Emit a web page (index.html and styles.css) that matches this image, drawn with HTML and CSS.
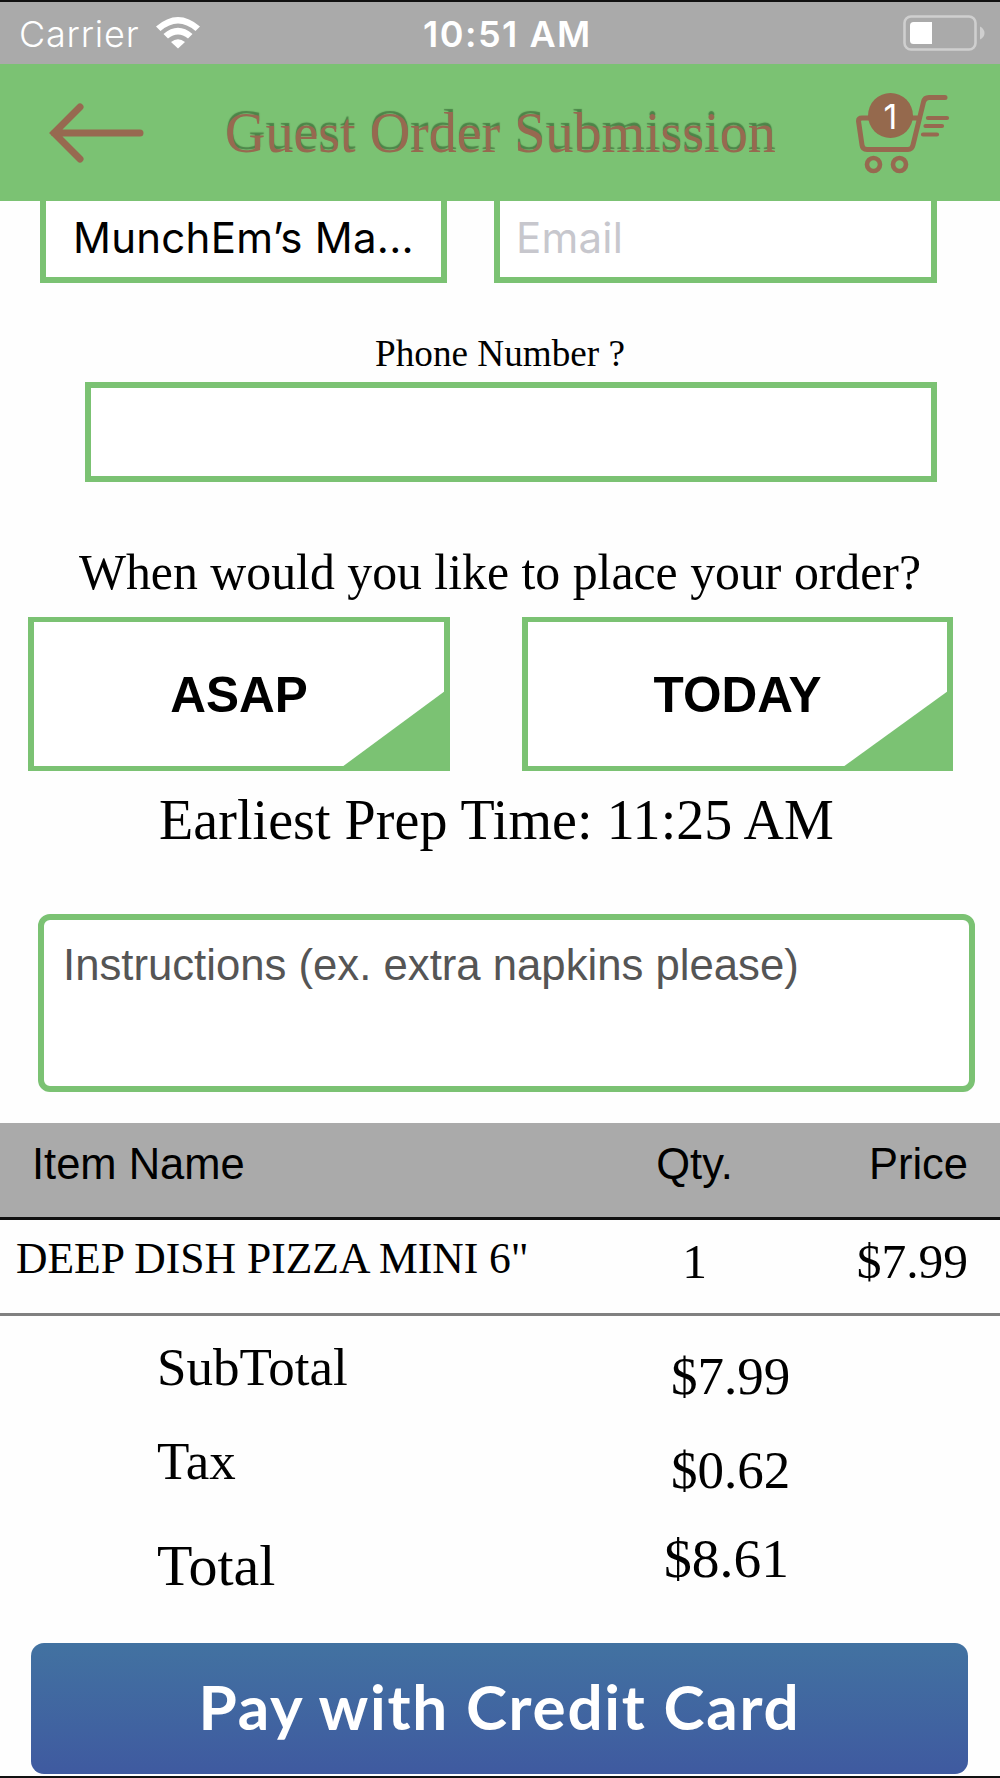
FILE: index.html
```html
<!DOCTYPE html>
<html lang="en">
<head>
    <meta charset="UTF-8">
    <title>Guest Order Submission</title>
    <link rel="stylesheet" href="styles.css">
</head>
<body>
    <div class="status">
        <div class="carrier">
            <span>Carrier</span>
            <svg class="wifi" width="44" height="32" viewBox="0 0 44 32">
                <path d="M0 9.5 Q22 -9.5 44 9.5 L39.5 14 Q22 -1 4.500 14 Z"/>
                <path d="M7.500 17 Q22 4.500 36.500 17 L32 21.500 Q22 13.500 12 21.500 Z"/>
                <path d="M15 25 Q22 19.500 29 25 L22 31.500 Z"/>
            </svg>
        </div>
        <div class="clock">10:51 AM</div>
        <svg class="battery" width="82" height="36" viewBox="0 0 82 36">
            <rect x="1.500" y="1.500" width="71" height="33" rx="6.500" fill="none" stroke="#cfcfcf" stroke-width="2.600"/>
            <path d="M29 7 V29 H10.500 Q7 29 7 25.500 V10.500 Q7 7 10.500 7 Z" fill="#fff"/>
            <path d="M77 11.500 Q81.500 14 81.500 18 Q81.500 22 77 24.500 Z" fill="#cfcfcf"/>
        </svg>
    </div>
    <div class="header">
        <svg class="back" width="96" height="60" viewBox="0 0 96 60">
            <path d="M31 4 L5 30 L31 56 M5 30 H91"/>
        </svg>
        <h1 class="title">Guest Order Submission</h1>
        <div class="cart">
            <svg width="96" height="84" viewBox="0 0 96 84">
                <path d="M90 5.500 H74 Q69.500 5.500 68.500 10 L58 53 Q57 57.500 53 57.500 H12 Q7.500 57.500 7 53 L3.500 29 Q3.500 26 7 26 H64" stroke-width="5"/>
                <path d="M73 26 H92 M70.500 34 H87 M68 42.500 H82" stroke-width="4.200"/>
                <circle cx="18.500" cy="72.500" r="6.500" stroke-width="4.600"/>
                <circle cx="44.500" cy="72.500" r="6.500" stroke-width="4.600"/>
            </svg>
            <span class="badge">1</span>
        </div>
    </div>

    <div class="fields">
        <div class="field name">MunchEm’s Ma...</div>
        <div class="field email">Email</div>
    </div>
    <div class="phone-label">Phone Number ?</div>
    <div class="phone"></div>

    <div class="question">When would you like to place your order?</div>
    <div class="times">
        <div class="btn asap">
            <span>ASAP</span>
            <svg class="corner" width="103" height="76" viewBox="0 0 103 76"><path d="M103 0 V76 H0 Z"/></svg>
        </div>
        <div class="btn today">
            <span>TODAY</span>
            <svg class="corner" width="105" height="76" viewBox="0 0 105 76"><path d="M105 0 V76 H0 Z"/></svg>
        </div>
    </div>
    <div class="prep">Earliest Prep Time: 11:25 AM</div>

    <div class="instructions">Instructions (ex. extra napkins please)</div>

    <div class="row head">
        <div class="item">Item Name</div>
        <div class="qty">Qty.</div>
        <div class="price">Price</div>
    </div>
    <div class="row line">
        <div class="item">DEEP DISH PIZZA MINI 6"</div>
        <div class="qty">1</div>
        <div class="price">$7.99</div>
    </div>
    <div class="totals">
        <div class="labels">
            <div>SubTotal</div>
            <div>Tax</div>
            <div class="big">Total</div>
        </div>
        <div class="amounts">
            <div>$7.99</div>
            <div>$0.62</div>
            <div class="big">$8.61</div>
        </div>
    </div>

    <div class="pay">Pay with Credit Card</div>
    <div class="bottom"></div>
</body>
</html>
```

FILE: styles.css
```css
* {
    box-sizing: border-box;
}
body {
    margin: 0;
    width: 1000px;
    height: 1778px;
    overflow: hidden;
    background-color: #fefefe;
    color: #000;
    font-family: "Liberation Serif", serif;
    white-space: nowrap;
    display: flex;
    flex-direction: column;
}
svg {
    display: block;
}

/* status bar */
.status {
    height: 64px;
    border-top: 2px solid #111;
    background-color: #aaa;
    color: #fff;
    font-family: Inter, sans-serif;
    font-size: 36px;
    line-height: 64px;
    display: grid;
    grid-template-columns: 423px 480px 82px;
}
.carrier {
    padding-left: 19px;
    display: flex;
    gap: 17px;
    letter-spacing: 0.8px;
    font-weight: 300;
}
.wifi {
    margin-top: 15px;
    fill: #fff;
}
.clock {
    font-weight: 600;
    letter-spacing: 1.5px;
}
.battery {
    margin-top: 13px;
}

/* header */
.header {
    height: 137px;
    background-color: #7bc273;
    display: grid;
    grid-template-columns: 225px 627px 96px;
}
.back {
    margin: 39px 0 0 49px;
    fill: none;
    stroke: #976950;
    stroke-width: 7;
    stroke-linecap: round;
}
.title {
    margin: 0;
    color: #976950;
    font-size: 56px;
    font-weight: normal;
    line-height: 139px;
    text-shadow: 0 -3px 1px #4c8448;
}
.cart {
    position: relative;
    margin: 28px 0 0 3px;
}
.cart svg {
    fill: none;
    stroke: #976950;
    stroke-linecap: round;
}
.badge {
    position: absolute;
    left: 13px;
    top: 1px;
    width: 45px;
    height: 45px;
    border-radius: 50%;
    background-color: #95694d;
    color: #fff;
    font-family: Inter, sans-serif;
    font-size: 34px;
    line-height: 48px;
    text-align: center;
}

/* contact fields */
.fields {
    padding-left: 40px;
    display: flex;
    gap: 47px;
    font-family: Inter, sans-serif;
    font-size: 42px;
    line-height: 73px;
    letter-spacing: 0.25px;
}
.field {
    height: 82px;
    border: 6px solid #7bc273;
    border-top: 0;
    background-color: #fff;
}
.name {
    width: 407px;
    padding-left: 27px;
}
.email {
    width: 443px;
    padding-left: 16px;
    color: #c7c7cd;
}
.phone-label {
    margin-top: 43px;
    font-size: 37.2px;
    line-height: 56px;
    text-align: center;
}
.phone {
    width: 852px;
    height: 100px;
    margin-left: 85px;
    border: 6px solid #7bc273;
    background-color: #fff;
}

/* order time */
.question {
    margin: 61px 0 14px;
    font-size: 49.8px;
    line-height: 60px;
    text-align: center;
}
.times {
    padding-left: 28px;
    display: flex;
    gap: 72px;
}
.btn {
    position: relative;
    height: 154px;
    border: 6px solid #7bc273;
    border-top-width: 5px;
    border-bottom-width: 5px;
    background-color: #fff;
    font-family: "Liberation Sans", sans-serif;
    font-size: 49.5px;
    font-weight: bold;
    line-height: 145px;
    text-align: center;
}
.asap {
    width: 422px;
}
.today {
    width: 431px;
}
.corner {
    position: absolute;
    right: -1px;
    bottom: -1px;
    fill: #7bc273;
}
.prep {
    margin-top: 17px;
    padding-left: 159px;
    font-size: 56px;
    line-height: 64px;
    letter-spacing: 0.06px;
}
.instructions {
    width: 937px;
    height: 178px;
    margin: 62px 0 31px 38px;
    padding: 14px 19px;
    border: 6px solid #7bc273;
    border-radius: 12px;
    background-color: #fff;
    color: #555;
    font-family: "Liberation Sans", sans-serif;
    font-size: 43.7px;
    line-height: 61px;
}

/* order items */
.row {
    display: grid;
    grid-template-columns: 592px 204px 204px;
}
.head {
    height: 97px;
    border-bottom: 3px solid #111;
    background-color: #aaa;
    font-family: "Liberation Sans", sans-serif;
    font-size: 43.5px;
    line-height: 83px;
}
.line {
    height: 96px;
    border-bottom: 3px solid #808080;
    font-size: 49.5px;
    line-height: 83px;
}
.head .item {
    padding-left: 32px;
}
.line .item {
    padding-left: 16px;
    font-size: 43.6px;
    line-height: 76px;
}
.qty {
    padding-left: 1px;
    text-align: center;
}
.price {
    padding-right: 32px;
    text-align: right;
}

/* totals */
.totals {
    height: 327px;
    padding-left: 157px;
    display: flex;
    font-size: 53px;
    line-height: 94px;
}
.labels {
    width: 514px;
    padding-top: 4px;
}
.amounts {
    padding-top: 13px;
}
.labels .big {
    font-size: 58px;
    line-height: 115px;
}
.amounts .big {
    margin-left: -7px;
    font-size: 55.5px;
    line-height: 84px;
}

.pay {
    width: 937px;
    height: 131px;
    margin-left: 31px;
    border-radius: 13px;
    background: linear-gradient(#4272a1, #3f5aa0);
    color: #fff;
    font-family: Lato, sans-serif;
    font-size: 62px;
    font-weight: bold;
    line-height: 127px;
    letter-spacing: 1.75px;
    text-align: center;
}
.bottom {
    height: 2px;
    margin-top: 2px;
    background-color: #111;
}
```
